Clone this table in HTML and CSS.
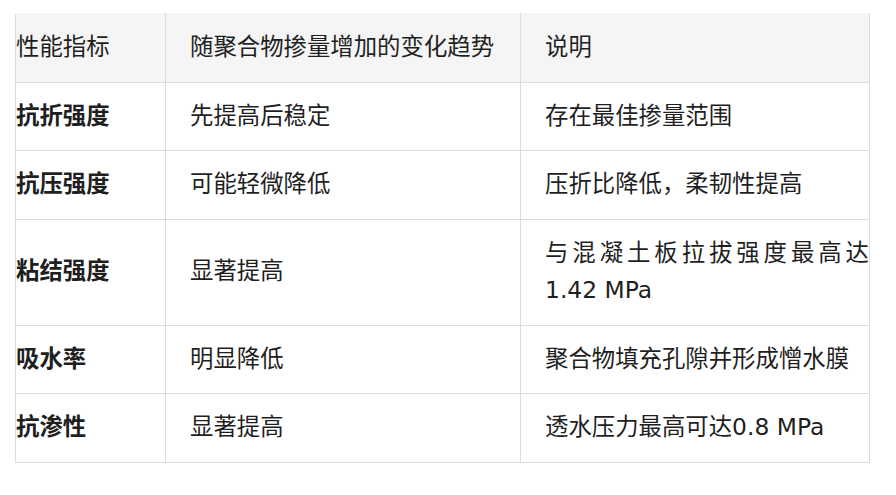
FILE: index.html
```html
<!DOCTYPE html>
<html lang="zh">
<head>
<meta charset="utf-8">
<link rel="stylesheet" href="styles.css">
</head>
<body>
<div class="wrap">
<table class="grid">
<colgroup><col class="c1"><col class="c2"><col class="c3"></colgroup>
<thead>
<tr><th>性能指标</th><th>随聚合物掺量增加的变化趋势</th><th>说明</th></tr>
</thead>
<tbody>
<tr><td>抗折强度</td><td>先提高后稳定</td><td>存在最佳掺量范围</td></tr>
<tr><td>抗压强度</td><td>可能轻微降低</td><td>压折比降低，柔韧性提高</td></tr>
<tr><td>粘结强度</td><td>显著提高</td><td>与混凝土板拉拔强度最高达1.42 MPa</td></tr>
<tr><td>吸水率</td><td>明显降低</td><td>聚合物填充孔隙并形成憎水膜</td></tr>
<tr><td>抗渗性</td><td>显著提高</td><td>透水压力最高可达0.8 MPa</td></tr>
</tbody>
</table>
</div>
</body>
</html>
```
FILE: styles.css
```css
html, body {
  margin: 0;
  background: #ffffff;
}
.wrap {
  padding: 13px 0 0 15px;
}
.grid {
  border-collapse: collapse;
  table-layout: fixed;
  width: 854px;
  font-family: "DejaVu Sans", "Noto Sans CJK SC", sans-serif;
  font-size: 23.4px;
  line-height: 37.5px;
  color: #1f1f1f;
}
.c1 { width: 150px; }
.c2 { width: 355px; }
.c3 { width: 349px; }
.grid th, .grid td {
  border: 1px solid #dcdcdc;
  padding: 15px 24px;
  text-align: justify;
  vertical-align: middle;
  font-weight: normal;
}
.grid th {
  background: #f5f5f5;
}
.grid th:first-child, .grid td:first-child {
  padding-left: 0;
}
.grid th:last-child, .grid td:last-child {
  padding-right: 0;
}
.grid td:first-child {
  font-weight: bold;
}
.grid thead tr th {
  border-top: 1px solid #f5f5f5;
}
```
